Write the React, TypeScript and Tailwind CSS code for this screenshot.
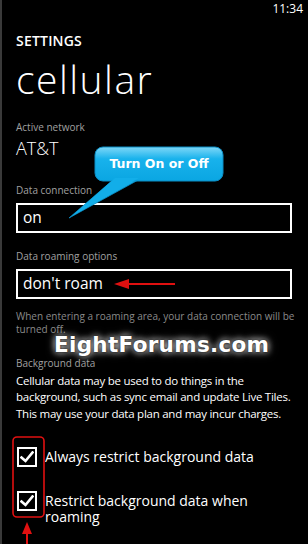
import React from "react";

const font = { fontFamily: '"Open Sans", "Noto Sans", sans-serif' };

function Check() {
  return (
    <div className="w-[20px] h-[20px] border-2 border-white bg-black flex items-center justify-center shrink-0">
      <svg width="14" height="12" viewBox="0 0 14 12">
        <path d="M1.5 6.5 L5.5 10 L12.5 1.5" fill="none" stroke="white" strokeWidth="2.6" strokeLinecap="square" />
      </svg>
    </div>
  );
}

export default function App() {
  return (
    <div
      className="relative w-[308px] h-[544px] bg-black overflow-hidden text-white border-l-2 border-[#3a3a3a]"
      style={font}
    >
      <div className="flex justify-end pr-[5px] h-[18px] text-[12px] leading-[18px]">11:34</div>
      <div className="pl-[14px]">
        <div className="mt-[15px] text-[14px] leading-[16px] font-semibold tracking-[0.2px]">SETTINGS</div>
        <div className="mt-[8px] text-[39px] leading-[44px] font-light tracking-[1.5px]">cellular</div>

        <div className="mt-[20px] text-[10px] leading-[13px] text-[#a0a0a0]">Active network</div>
        <div className="mt-[3px] text-[18px] leading-[22px] font-light">AT&amp;T</div>

        <div className="mt-[25px] text-[10px] leading-[13px] text-[#a0a0a0]">Data connection</div>
        <div className="mt-[6px] w-[276px] h-[30px] border-2 border-white flex items-center pl-[5px] text-[15.5px]">on</div>

        <div className="mt-[17px] text-[10px] leading-[13px] text-[#a0a0a0]">Data roaming options</div>
        <div className="mt-[6px] w-[276px] h-[30px] border-2 border-white flex items-center pl-[5px] text-[15.5px]">don't roam</div>

        <div className="mt-[11px] text-[10px] leading-[13px] text-[#8a8a8a] pr-[6px]">
          When entering a roaming area, your data connection will be turned off.
        </div>

        <div className="mt-[21px] text-[10px] leading-[13px] text-[#a0a0a0]">Background data</div>
        <div className="mt-[2.5px] text-[11.5px] leading-[16.7px] pr-[4px] tracking-[-0.25px]">
          Cellular data may be used to do things in the background, such as sync email and update Live Tiles. This may use your data plan and may incur charges.
        </div>

        <div className="mt-[24px] flex items-center gap-[8px] pl-[1px]">
          <Check />
          <div className="text-[14px] leading-[16px]">Always restrict background data</div>
        </div>
        <div className="mt-[24px] flex items-start gap-[8px] pl-[1px]">
          <Check />
          <div className="text-[14px] leading-[16px] mt-[2.5px]">Restrict background data when<br />roaming</div>
        </div>
      </div>

      {/* callout bubble and red markers */}
      <svg className="absolute left-0 top-0" width="308" height="544" viewBox="0 0 308 544">
        <defs>
          <linearGradient id="gloss" x1="0" y1="0" x2="0" y2="1">
            <stop offset="0" stopColor="#7fd8f8" />
            <stop offset="0.35" stopColor="#18b2ec" />
            <stop offset="1" stopColor="#0aa6e2" />
          </linearGradient>
        </defs>
        <polygon points="112,179 138,179 67,218" fill="#12aee9" stroke="#0b8dc4" strokeWidth="0.8" />
        <rect x="93" y="147" width="128" height="34" rx="8" fill="url(#gloss)" stroke="#0b8dc4" strokeWidth="1" />
        <polygon points="113,178 137,178 70,216" fill="#12aee9" />
        <line x1="124" y1="284" x2="173" y2="284" stroke="#e01010" strokeWidth="2" />
        <polygon points="112,284 127,279 127,289" fill="#e01010" />
        <rect x="11" y="437" width="31" height="80" rx="4" fill="none" stroke="#e01010" strokeWidth="1.6" />
        <line x1="25" y1="532" x2="25" y2="544" stroke="#e01010" strokeWidth="2" />
        <polygon points="25,522 20,534 30,534" fill="#e01010" />
      </svg>
      <div
        className="absolute left-[93px] top-[147px] w-[128px] h-[34px] flex items-center justify-center text-[12.5px] font-bold text-white"
        style={{ fontFamily: '"DejaVu Sans", Verdana, sans-serif' }}
      >
        Turn On or Off
      </div>

      {/* watermark */}
      <div
        className="absolute left-[52px] top-[332px] text-[21.5px] leading-[26px] font-bold text-white tracking-[0.3px] [text-shadow:0_0_3px_#000,0_0_6px_rgba(255,255,255,0.9),0_0_10px_rgba(255,255,255,0.6)]"
        style={{ fontFamily: '"DejaVu Sans", Verdana, sans-serif' }}
      >
        EightForums.com
      </div>
    </div>
  );
}
